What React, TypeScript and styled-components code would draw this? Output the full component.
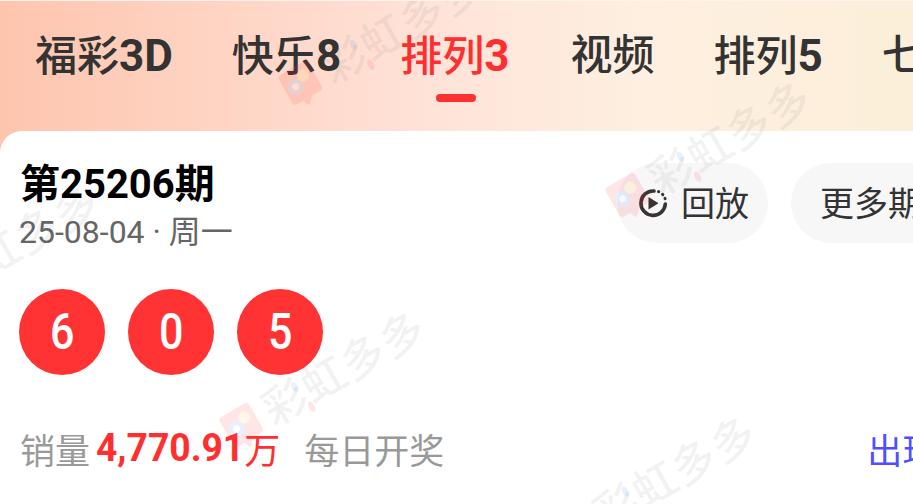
import React from "react";
import styled, { createGlobalStyle } from "styled-components";

const Global = createGlobalStyle`
  html, body { margin: 0; padding: 0; background: #fff; overflow: hidden; }
  body { font-family: Roboto, "Noto Sans CJK SC", sans-serif; }
`;

const Page = styled.div`
  position: relative;
  width: 913px;
  height: 504px;
  overflow: hidden;
  background: linear-gradient(90deg, #fec5ae 0%, #ffe3d9 48%, #feefe0 70%, #fcefd9 100%);
  border-top: 1px solid #fff3ee;
  box-sizing: border-box;
`;

const TabBar = styled.nav`
  display: flex;
  gap: 59px;
  height: 130px;
  padding-left: 35px;
  box-sizing: border-box;
`;

const Tab = styled.div<{ $active?: boolean; $inset?: boolean }>`
  position: relative;
  flex: none;
  margin-left: ${(p) => (p.$inset ? "2px" : "0")};
  padding-top: 25px;
  font-size: 42px;
  line-height: 60px;
  font-weight: 500;
  white-space: nowrap;
  color: ${(p) => (p.$active ? "#ff2f2f" : "#333")};
`;

const TabLatin = styled.span`
  font-size: 44px;
  font-weight: 700;
`;

const TabMark = styled.span`
  position: absolute;
  left: 36px;
  top: 93px;
  width: 40px;
  height: 8px;
  border-radius: 4px;
  background: #ff3030;
`;

const Card = styled.section`
  width: 1120px;
  height: 373px;
  padding: 27px 0 0 20px;
  box-sizing: border-box;
  background: #fff;
  border-radius: 22px 22px 0 0;
`;

const Head = styled.header`
  display: flex;
  align-items: flex-start;
`;

const Info = styled.div`
  width: 597px;
  flex: none;
`;

const Title = styled.h2`
  margin: 1px 0 0;
  font-size: 40px;
  line-height: 51px;
  font-weight: 700;
  color: #000;
`;

const DateLine = styled.div`
  margin-left: -1px;
  font-size: 32px;
  line-height: 44px;
  color: #666;
`;

const Actions = styled.div`
  display: flex;
  gap: 23px;
  margin-top: 5px;
`;

const Pill = styled.button`
  display: flex;
  align-items: center;
  gap: 13px;
  height: 80px;
  padding: 0 19px 4px 21px;
  box-sizing: border-box;
  border: 0;
  border-radius: 40px;
  background: #f7f7f7;
  font: 400 34px Roboto, "Noto Sans CJK SC", sans-serif;
  color: #333;
  white-space: nowrap;
`;

const MorePill = styled(Pill)`
  padding-left: 29px;
`;

const ReplayIcon = styled.svg`
  margin-top: 4px;
  flex: none;
`;

const Balls = styled.div`
  display: flex;
  gap: 23px;
  margin-top: 35px;
  margin-left: -1px;
`;

const Ball = styled.span`
  display: flex;
  align-items: center;
  justify-content: center;
  width: 86px;
  height: 86px;
  border-radius: 50%;
  background: #ff3333;
  color: #fff;
  font-size: 50px;
  font-weight: 500;
`;

const Digit = styled.span`
  display: inline-block;
  transform: scaleX(0.86);
`;

const Stats = styled.div`
  display: flex;
  align-items: center;
  margin-top: 50px;
  height: 46px;
  font-size: 35px;
  color: #999;
  white-space: nowrap;
`;

const Sales = styled.b`
  display: inline-block;
  margin: 0 -3px 0 6px;
  color: #ff2f2f;
  font-weight: 700;
  font-size: 38px;
  transform: scaleX(0.98);
  transform-origin: left center;
`;

const Unit = styled.span`
  color: #ff2f2f;
  font-size: 36px;
`;

const Daily = styled.span`
  margin-left: 24px;
`;

const Appear = styled.span`
  margin-left: 423px;
  color: #4f4fff;
`;

const Marks = styled.div`
  position: absolute;
  inset: 0;
  pointer-events: none;
`;

const Mark = styled.div<{ $x: number; $y: number }>`
  position: absolute;
  left: ${(p) => p.$x}px;
  top: ${(p) => p.$y}px;
  display: flex;
  align-items: center;
  gap: 6px;
  transform: rotate(-30deg);
  transform-origin: 20px 25px;
  font-size: 44px;
  line-height: 50px;
  font-weight: 500;
  letter-spacing: 1px;
  white-space: nowrap;
  color: rgba(60, 60, 60, 0.07);
`;

const MarkDot = styled.i<{ $c: string; $l: number; $t: number }>`
  position: absolute;
  left: ${(p) => p.$l}px;
  top: ${(p) => p.$t}px;
  width: 6px;
  height: 11px;
  border-radius: 50%;
  background: ${(p) => p.$c};
  opacity: 0.12;
`;

const MarkLogo = () => (
  <svg width="42" height="44" viewBox="0 0 42 44" opacity="0.12">
    <path d="M4 6 Q4 2 8 2 L34 2 Q38 2 38 6 L38 32 Q38 36 34 36 L25 36 L18 43 L14 36 L8 36 Q4 36 4 32 Z" fill="#ff3030" />
    <circle cx="15" cy="20" r="8" fill="#3d8bff" />
    <circle cx="27" cy="14" r="6" fill="#ffc83d" />
    <circle cx="15" cy="20" r="3.5" fill="#fff" />
  </svg>
);

const Replay = () => (
  <ReplayIcon width="30" height="30" viewBox="0 0 30 30" fill="none">
    <path d="M16 3 A12.2 12.2 0 1 0 27.3 16" stroke="#3a3333" strokeWidth="3.6" strokeLinecap="round" />
    <path d="M20.5 3.6 L20.7 3.7 M24.6 6.4 L24.8 6.6 M27 10.4 L27.1 10.6" stroke="#3a3333" strokeWidth="3" strokeLinecap="round" />
    <path d="M10.5 9 L20.5 15.3 L10.5 21.6 Z" fill="#3a3333" />
  </ReplayIcon>
);

const tabs: [string, string][] = [
  ["福彩", "3D"],
  ["快乐", "8"],
  ["排列", "3"],
  ["视频", ""],
  ["排列", "5"],
  ["七星彩", ""],
];
const marks: [number, number][] = [
  [281, 60],
  [608, 172],
  [-104, 276],
  [222, 402],
  [553, 507],
];

export default function App() {
  return (
    <Page>
      <Global />
      <TabBar>
        {tabs.map(([cjk, latin]) => {
          const active = cjk + latin === "排列3";
          return (
            <Tab key={cjk + latin} $active={active} $inset={cjk === "视频"}>
              {cjk}
              {latin && <TabLatin>{latin}</TabLatin>}
              {active && <TabMark />}
            </Tab>
          );
        })}
      </TabBar>
      <Card>
        <Head>
          <Info>
            <Title>第25206期</Title>
            <DateLine>25-08-04 · 周一</DateLine>
          </Info>
          <Actions>
            <Pill>
              <Replay />
              回放
            </Pill>
            <MorePill>更多期数</MorePill>
          </Actions>
        </Head>
        <Balls>
          {[6, 0, 5].map((n) => (
            <Ball key={n}>
              <Digit>{n}</Digit>
            </Ball>
          ))}
        </Balls>
        <Stats>
          销量
          <Sales>4,770.91</Sales>
          <Unit>万</Unit>
          <Daily>每日开奖</Daily>
          <Appear>出现次数</Appear>
        </Stats>
      </Card>
      <Marks>
        {marks.map(([x, y]) => (
          <Mark key={`${x}-${y}`} $x={x} $y={y}>
            <MarkLogo />
            彩虹多多
            <MarkDot $c="#3d8bff" $l={83} $t={10} />
            <MarkDot $c="#ff3030" $l={88} $t={36} />
          </Mark>
        ))}
      </Marks>
    </Page>
  );
}
